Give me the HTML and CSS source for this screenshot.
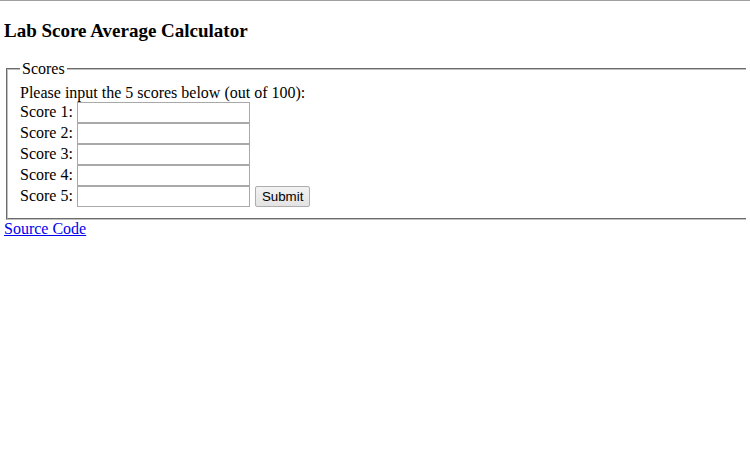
FILE: index.html
```html
<!DOCTYPE html>
<html>
<head>
<meta charset="utf-8">
<title>Lab Score Average Calculator</title>
<link rel="stylesheet" href="styles.css">
</head>
<body>
<h3 class="title">Lab Score Average Calculator</h3>
<form class="form">
  <fieldset class="scores">
    <legend class="legend">Scores</legend>
    <div class="intro">Please input the 5 scores below (out of 100):</div>
    <div class="row"><label class="label">Score 1:</label><input class="field" type="text"></div>
    <div class="row"><label class="label">Score 2:</label><input class="field" type="text"></div>
    <div class="row"><label class="label">Score 3:</label><input class="field" type="text"></div>
    <div class="row"><label class="label">Score 4:</label><input class="field" type="text"></div>
    <div class="row"><label class="label">Score 5:</label><input class="field" type="text"><button class="submit" type="button">Submit</button></div>
  </fieldset>
</form>
<a class="source" href="#">Source Code</a>
</body>
</html>
```
FILE: styles.css
```css
html {
  overflow: hidden;
  border-top: 1px solid #a0a0a0;
  background: #fff;
}
body {
  margin: 4px;
  font-family: "Liberation Serif", "Times New Roman", serif;
  font-size: 16px;
  color: #000;
}
.title {
  font-size: 19px;
  font-weight: bold;
  margin: 14.5px 0 18px;
}
.form {
  margin: 0;
}
.scores {
  margin: 0 -4px 0 2px;
  padding: 5.6px 12px 11px;
  border: 2px groove #c0c0c0;
  border-right: 0 none;
}
.legend {
  padding: 0 2px;
}
.intro {
  line-height: 19px;
}
.row {
  display: flex;
  align-items: baseline;
  gap: 4px;
  height: 21px;
}
.field {
  box-sizing: border-box;
  width: 173px;
  height: 21px;
  margin: 0;
  padding: 1px 2px;
  border: 1px solid #a9a9a9;
  font-family: "Liberation Sans", Arial, sans-serif;
  font-size: 13.33px;
}
.submit {
  box-sizing: border-box;
  height: 21px;
  margin-left: 1px;
  padding: 0 6px;
  border: 1px solid #adadad;
  border-radius: 2px;
  background: linear-gradient(#f2f2f2, #e3e3e3);
  font-family: "Liberation Sans", Arial, sans-serif;
  font-size: 13.33px;
  color: #000;
}
.source {
  color: #0000ee;
  text-decoration: underline;
}
```
